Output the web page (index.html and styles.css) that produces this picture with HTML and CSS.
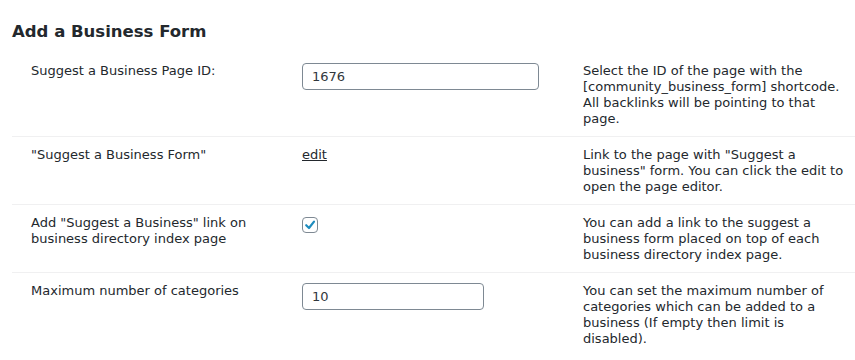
FILE: index.html
```html
<!DOCTYPE html>
<html lang="en">
<head>
    <meta charset="UTF-8">
    <title>Add a Business Form</title>
    <link rel="stylesheet" href="styles.css">
</head>
<body>
	<div class="wrap">
		<h2 class="section-title">Add a Business Form</h2>

		<div class="form-table">
			<div class="form-row">
				<div class="form-label">Suggest a Business Page ID:</div>
				<div class="form-field">
					<input type="text" class="text-input wide" value="1676">
				</div>
				<div class="form-desc">Select the ID of the page with the [community_business_form] shortcode. All backlinks will be pointing to that page.</div>
			</div>

			<div class="form-row">
				<div class="form-label">"Suggest a Business Form"</div>
				<div class="form-field">
					<a href="#" class="edit-link">edit</a>
				</div>
				<div class="form-desc">Link to the page with "Suggest a business" form. You can click the edit to open the page editor.</div>
			</div>

			<div class="form-row">
				<div class="form-label">Add "Suggest a Business" link on business directory index page</div>
				<div class="form-field">
					<span class="check-box">
						<svg width="14" height="14" viewBox="0 0 14 14">
							<path d="M3.2 7.2 L6 10 L11 3.6" fill="none" stroke="#1e8cbe" stroke-width="2.2" stroke-linecap="round" stroke-linejoin="round"/>
						</svg>
					</span>
				</div>
				<div class="form-desc">You can add a link to the suggest a business form placed on top of each business directory index page.</div>
			</div>

			<div class="form-row">
				<div class="form-label">Maximum number of categories</div>
				<div class="form-field">
					<input type="text" class="text-input narrow" value="10">
				</div>
				<div class="form-desc">You can set the maximum number of categories which can be added to a business (If empty then limit is disabled).</div>
			</div>
		</div>
	</div>
</body>
</html>
```

FILE: styles.css
```css
		body {
			margin: 0;
			overflow-x: hidden;
			background: #fff;
			color: #23282d;
			font-family: "DejaVu Sans", Verdana, sans-serif;
			font-size: 13px;
			line-height: 16px;
		}

		.wrap {
			padding-left: 12px;
		}

		.section-title {
			margin: 21px 0 10px;
			font-size: 16.5px;
			line-height: 22px;
			font-weight: bold;
			color: #23282d;
		}

		.form-row {
			display: grid;
			grid-template-columns: 280px 281px 1fr;
			border-bottom: 1px solid #f0f0f1;
		}

		.form-row:last-child {
			border-bottom: none;
		}

		.form-label {
			padding: 10px 31px 9px 19px;
		}

		.form-field {
			padding: 10px 10px 9px 10px;
		}

		.form-desc {
			padding: 10px 0 9px 10px;
			max-width: 264px;
		}

		.text-input {
			display: block;
			box-sizing: border-box;
			height: 27px;
			margin: 0;
			padding: 0 9px;
			border: 1px solid #7e8993;
			border-radius: 4px;
			font-family: "DejaVu Sans", Verdana, sans-serif;
			font-size: 13px;
			color: #32373c;
			background: #fff;
		}

		.wide {
			width: 237px;
		}

		.narrow {
			width: 182px;
		}

		.edit-link {
			color: #23282d;
			text-decoration: underline;
		}

		.check-box {
			display: flex;
			align-items: center;
			justify-content: center;
			box-sizing: border-box;
			width: 16px;
			height: 16px;
			margin-top: 2px;
			border: 1px solid #7e8993;
			border-radius: 4px;
			background: #fff;
		}
```
